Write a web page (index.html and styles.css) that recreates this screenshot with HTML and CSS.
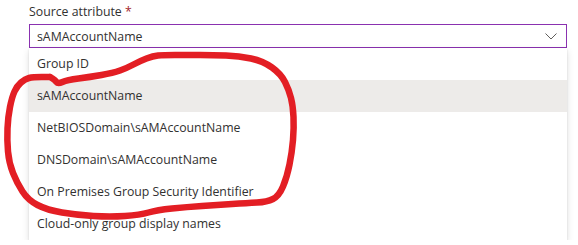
FILE: index.html
```html
<!DOCTYPE html>
<html lang="en">
<head>
    <meta charset="UTF-8">
    <meta name="viewport" content="width=device-width, initial-scale=1.0">
    <title>Source attribute</title>
    <link rel="stylesheet" href="styles.css">
</head>
<body>

<div class="field">
    <div class="field-label">Source attribute <span class="required">*</span></div>

    <div class="select">
        <span class="select-value">sAMAccountName</span>
        <svg class="chevron" width="12" height="7" viewBox="0 0 12 7">
            <path d="M0.5 0.5 L6 6 L11.5 0.5" fill="none" stroke="#605e5c" stroke-width="1"/>
        </svg>
    </div>

    <ul class="options">
        <li class="option">Group ID</li>
        <li class="option selected">sAMAccountName</li>
        <li class="option">NetBIOSDomain\sAMAccountName</li>
        <li class="option">DNSDomain\sAMAccountName</li>
        <li class="option">On Premises Group Security Identifier</li>
        <li class="option">Cloud-only group display names</li>
    </ul>
</div>

<!-- hand-drawn markup on top of the screenshot -->
<svg class="scribble" width="578" height="245" viewBox="0 0 578 245">
    <path d="M50 77 L41.5 77 Q33 77 29 78 Q25 79 21 82.5 Q17 86 14.5 91.5 Q12 97 10 107 Q8 117 7.5 128.5 Q7 140 8 151.5 Q9 163 13 173 Q17 183 22.5 191.5 Q28 200 37.5 205 Q47 210 62 212.5 Q77 215 93.5 216 Q110 217 125 216 Q140 215 148.5 212.5 Q157 210 172 208.5 Q187 207 202 206 Q217 205 232 204 Q247 203 257 202.5 Q267 202 273 199 Q279 196 283 186.5 Q287 177 289.5 164.5 Q292 152 293 140 Q294 128 293.5 117 Q293 106 291 98 Q289 90 285 82 Q281 74 272 67.5 Q263 61 251 58.5 Q239 56 226 55.5 Q213 55 200 55 Q187 55 175 55 Q163 55 158 55.5 Q153 56 146.5 58.5 Q140 61 133.5 64.5 Q127 68 120 70.5 Q113 73 101.5 75 Q90 77 78.5 78.5 Q67 80 62.5 82 Q58 84 56.5 82 Q55 80 52.5 78.5 L50 77"
          fill="none" stroke="#e31e24" stroke-width="6.5" stroke-linecap="round" stroke-linejoin="round"/>
</svg>

</body>
</html>
```

FILE: styles.css
```css
body {
    font-family: "Open Sans", "Noto Sans", Arial, sans-serif;
    font-size: 12.3px;
    color: #323130;
    margin: 0;
    padding: 0;
    background-color: #fff;
}
.field {
    width: 538px;
    margin-left: 29px;
}
.field-label {
    height: 24px;
    line-height: 24px;
}
.required {
    color: #a4262c;
}
.select {
    height: 24px;
    box-sizing: border-box;
    border: 1px solid #8a31b0;
    display: flex;
    align-items: center;
    justify-content: space-between;
    padding: 0 9px 0 7px;
}
.chevron {
    display: block;
}
.options {
    list-style: none;
    margin: 0;
    padding: 0;
    background-color: #fff;
    box-shadow: 0 3px 7px rgba(0, 0, 0, 0.13), 0 0.6px 1.8px rgba(0, 0, 0, 0.11);
}
.option {
    height: 32px;
    line-height: 32px;
    padding: 0 8px;
}
.option.selected {
    background-color: #edebe9;
}
.scribble {
    position: absolute;
    top: 0;
    left: 0;
    pointer-events: none;
}
```
